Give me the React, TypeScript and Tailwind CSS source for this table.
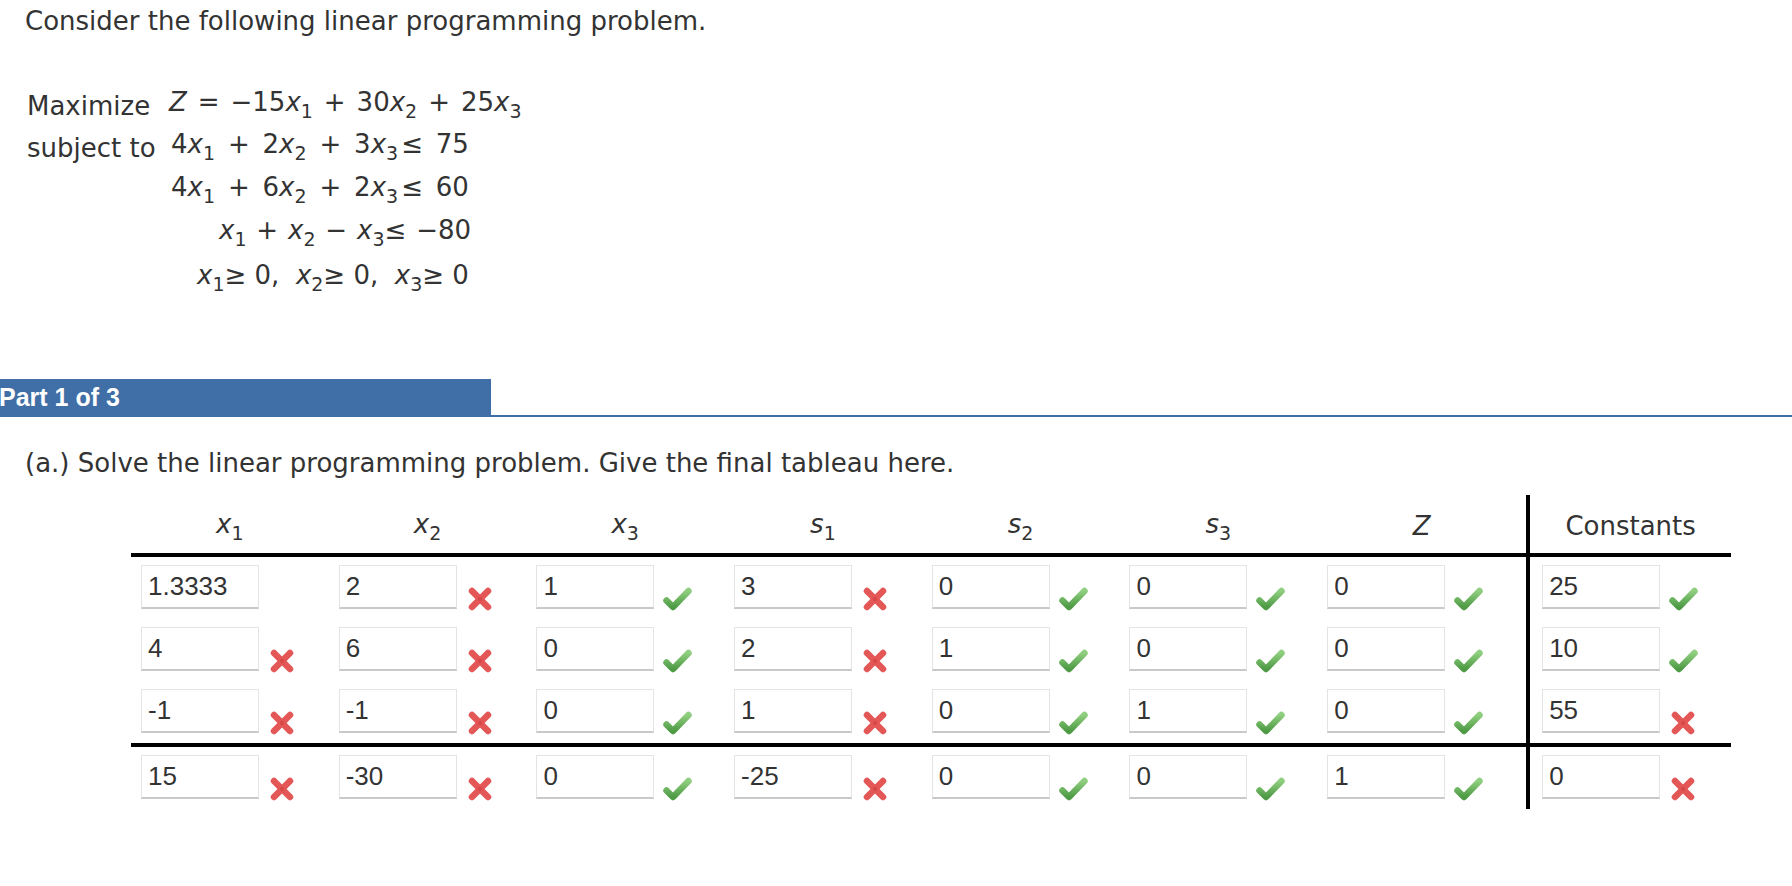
import React from "react";

type Mark = "x" | "c" | null;

const Check = () => (
  <svg width="29" height="24" viewBox="0 0 29 24" className="block">
    <defs>
      <linearGradient id="cg" x1="0" y1="0" x2="0" y2="1">
        <stop offset="0" stopColor="#8fcf7f" />
        <stop offset="1" stopColor="#4e9a45" />
      </linearGradient>
    </defs>
    <polyline
      points="3.5,13.5 10,20 25.5,4"
      fill="none"
      stroke="url(#cg)"
      strokeWidth="6.5"
      strokeLinecap="round"
      strokeLinejoin="round"
    />
  </svg>
);

const Cross = () => (
  <svg width="26" height="26" viewBox="0 0 26 26" className="block">
    <g stroke="#e45757" strokeWidth="6.5" strokeLinecap="round">
      <line x1="5" y1="5" x2="21" y2="21" />
      <line x1="21" y1="5" x2="5" y2="21" />
    </g>
    <circle cx="13" cy="13" r="2.2" fill="#d94848" />
  </svg>
);

const Sub = ({ children }: { children: React.ReactNode }) => (
  <span className="text-[19px] not-italic align-[-7px]">{children}</span>
);

const V = ({ v, s }: { v: string; s?: string }) => (
  <span>
    <span className="italic">{v}</span>
    {s ? <Sub>{s}</Sub> : null}
  </span>
);

const Cell = ({ value, mark, pl = "pl-[10px]" }: { value: string; mark: Mark; pl?: string }) => (
  <div className={`flex items-start pt-[8px] ${pl}`}>
    <div className="w-[118px] h-[44px] shrink-0 bg-white border border-[#e4e4e4] border-b-2 border-b-[#c9c9c9] pl-[6px] flex items-center text-[26px] text-[#333] font-['Liberation_Sans',Arial,sans-serif]">
      {value}
    </div>
    {mark === "c" ? (
      <div className="ml-[9px] mt-[22px]">
        <Check />
      </div>
    ) : mark === "x" ? (
      <div className="ml-[10px] mt-[21px]">
        <Cross />
      </div>
    ) : null}
  </div>
);

const rows: { cells: [string, Mark][]; k: [string, Mark]; cls: string }[] = [
  {
    cells: [["1.3333", null], ["2", "x"], ["1", "c"], ["3", "x"], ["0", "c"], ["0", "c"], ["0", "c"]],
    k: ["25", "c"],
    cls: "h-[62px]",
  },
  {
    cells: [["4", "x"], ["6", "x"], ["0", "c"], ["2", "x"], ["1", "c"], ["0", "c"], ["0", "c"]],
    k: ["10", "c"],
    cls: "h-[62px]",
  },
  {
    cells: [["-1", "x"], ["-1", "x"], ["0", "c"], ["1", "x"], ["0", "c"], ["1", "c"], ["0", "c"]],
    k: ["55", "x"],
    cls: "h-[66px] border-b-4 border-black",
  },
  {
    cells: [["15", "x"], ["-30", "x"], ["0", "c"], ["-25", "x"], ["0", "c"], ["0", "c"], ["1", "c"]],
    k: ["0", "x"],
    cls: "h-[62px]",
  },
];

const colW = ["w-[197.7px]", "w-[197.7px]", "w-[197.7px]", "w-[197.7px]", "w-[197.7px]", "w-[197.7px]", "w-[209px]"];

const headers: React.ReactNode[] = [
  <V v="x" s="1" />,
  <V v="x" s="2" />,
  <V v="x" s="3" />,
  <V v="s" s="1" />,
  <V v="s" s="2" />,
  <V v="s" s="3" />,
  <V v="Z" />,
];

export default function App() {
  return (
    <div className="w-full min-h-[886px] bg-white text-[#333] font-['DejaVu_Sans',Verdana,sans-serif] text-[26px]">
      <div className="pl-[25px] pt-[5px] leading-[32px]">Consider the following linear programming problem.</div>

      <div className="pl-[27px] mt-[48px] leading-[32px] whitespace-pre">
        <div className="flex items-center h-[42px]">
          <span className="w-[142px]">Maximize</span>
          <span className="[word-spacing:2.7px]">
            <span className="italic">Z</span> = −15<V v="x" s="1" /> + 30<V v="x" s="2" /> + 25<V v="x" s="3" />
          </span>
        </div>
        <div className="flex items-start">
          <div className="w-[144px] h-[42px] flex items-center">subject to</div>
          <div className="flex flex-col items-start">
            <div className="h-[42px] flex items-center">
              <span className="[word-spacing:4.6px]">
                4<V v="x" s="1" /> + 2<V v="x" s="2" /> + 3<V v="x" s="3" /><span className="ml-[3px]">≤</span> 75
              </span>
            </div>
            <div className="h-[44px] flex items-center">
              <span className="[word-spacing:4.6px]">
                4<V v="x" s="1" /> + 6<V v="x" s="2" /> + 2<V v="x" s="3" /><span className="ml-[3px]">≤</span> 60
              </span>
            </div>
            <div className="h-[42px] flex items-center ml-[48px]">
              <span className="[word-spacing:1.6px]">
                <V v="x" s="1" /> + <V v="x" s="2" /> − <V v="x" s="3" />≤ −80
              </span>
            </div>
            <div className="h-[48px] flex items-center ml-[26px]">
              <span>
                <V v="x" s="1" />≥ 0,  <V v="x" s="2" />≥ 0,  <V v="x" s="3" />≥ 0
              </span>
            </div>
          </div>
        </div>
      </div>

      <div className="flex mt-[76px] items-end">
        <div className="w-[491px] h-[38px] shrink-0 bg-[#406ea7] flex items-center">
          <span className="text-white font-bold text-[25px] font-['Liberation_Sans',Arial,sans-serif] -ml-[1px]">
            Part 1 of 3
          </span>
        </div>
        <div className="flex-1 h-[2px] bg-[#406ea7]" />
      </div>

      <div className="pl-[25px] mt-[31px] leading-[30px]">
        (a.) Solve the linear programming problem. Give the final tableau here.
      </div>

      <div className="ml-[131px] mt-[17px] w-[1600px]">
        <div className="flex h-[62px] border-b-4 border-black">
          {headers.map((h, i) => (
            <div key={i} className={`${colW[i]} shrink-0 flex items-center justify-center pt-[5px]`}>
              {h}
            </div>
          ))}
          <div className="w-[4px] bg-black shrink-0" />
          <div className="w-[201px] shrink-0 flex items-center justify-center pt-[5px]">Constants</div>
        </div>
        {rows.map((r, ri) => (
          <div key={ri} className={`flex ${r.cls}`}>
            {r.cells.map(([v, m], ci) => (
              <div key={ci} className={`${colW[ci]} shrink-0`}>
                <Cell value={v} mark={m} />
              </div>
            ))}
            <div className="w-[4px] bg-black shrink-0" />
            <div className="w-[201px] shrink-0">
              <Cell value={r.k[0]} mark={r.k[1]} pl="pl-[12px]" />
            </div>
          </div>
        ))}
      </div>
    </div>
  );
}
